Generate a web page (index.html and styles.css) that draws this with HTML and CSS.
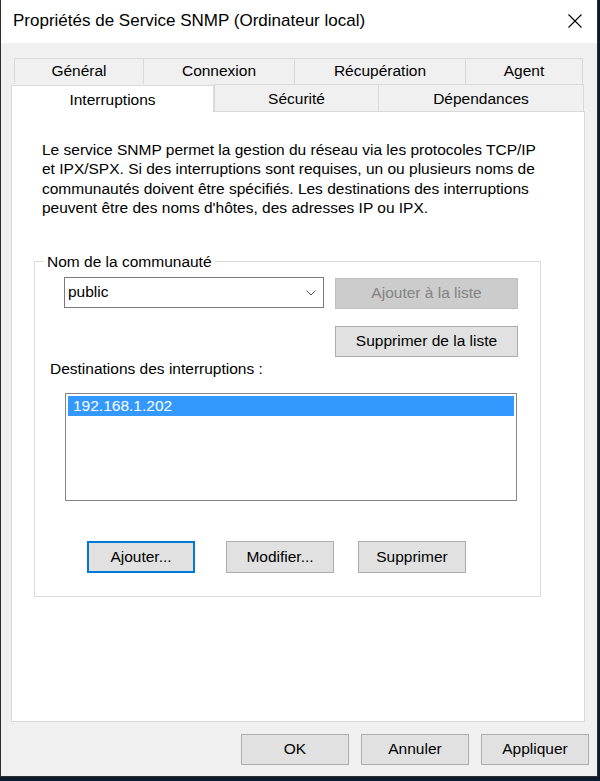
FILE: index.html
```html
<!DOCTYPE html>
<html lang="fr">
<head>
    <meta charset="UTF-8">
    <meta name="viewport" content="width=device-width, initial-scale=1.0">
    <title>Propriétés de Service SNMP</title>
    <link rel="stylesheet" href="styles.css">
</head>
<body>
    <div class="window">
        <div class="titlebar">
            <span class="title">Propriétés de Service SNMP (Ordinateur local)</span>
            <svg class="close" width="14" height="14" viewBox="0 0 14 14">
                <path d="M0.5 0.5 L13.5 13.5 M13.5 0.5 L0.5 13.5" stroke="#000" stroke-width="1.1" fill="none"/>
            </svg>
        </div>
        <div class="client">
            <div class="tabs">
                <div class="tab-row back">
                    <div class="tab t-general">Général</div>
                    <div class="tab t-connexion">Connexion</div>
                    <div class="tab t-recup">Récupération</div>
                    <div class="tab t-agent">Agent</div>
                </div>
                <div class="tab-row front">
                    <div class="tab t-interruptions active">Interruptions</div>
                    <div class="tab t-securite">Sécurité</div>
                    <div class="tab t-dependances">Dépendances</div>
                </div>
            </div>
            <div class="panel">
                <p class="intro">
                    Le service SNMP permet la gestion du réseau via les protocoles TCP/IP<br>
                    et IPX/SPX. Si des interruptions sont requises, un ou plusieurs noms de<br>
                    communautés doivent être spécifiés. Les destinations des interruptions<br>
                    peuvent être des noms d'hôtes, des adresses IP ou IPX.
                </p>
                <fieldset class="group">
                    <legend>Nom de la communauté</legend>
                    <div class="community">
                        <div class="combo">
                            <span>public</span>
                            <svg width="10" height="6" viewBox="0 0 10 6">
                                <path d="M0.5 0.5 L5 5 L9.5 0.5" stroke="#555" stroke-width="1" fill="none"/>
                            </svg>
                        </div>
                        <button class="btn" disabled>Ajouter à la liste</button>
                        <button class="btn remove">Supprimer de la liste</button>
                    </div>
                    <div class="dest-label">Destinations des interruptions :</div>
                    <div class="listbox">
                        <div class="item selected">192.168.1.202</div>
                    </div>
                    <div class="dest-actions">
                        <button class="btn focused">Ajouter...</button>
                        <button class="btn">Modifier...</button>
                        <button class="btn">Supprimer</button>
                    </div>
                </fieldset>
            </div>
            <div class="footer">
                <button class="btn">OK</button>
                <button class="btn">Annuler</button>
                <button class="btn">Appliquer</button>
            </div>
        </div>
    </div>
</body>
</html>
```

FILE: styles.css
```css
* {
    margin: 0;
    padding: 0;
    box-sizing: border-box;
}
body {
    background: #0b1a2c;
    font-family: "Liberation Sans", Arial, sans-serif;
    font-size: 15.5px;
    color: #000;
}
.window {
    width: 598px;
    height: 777px;
    background: #f0f0f0;
    border: 1px solid #2e2e2e;
    border-top: none;
}
.titlebar {
    height: 43px;
    background: #fff;
    display: flex;
    align-items: center;
    justify-content: space-between;
    padding: 0 15px 2px 12px;
}
.title {
    font-size: 17px;
}
.client {
    padding: 15px 10px 0 10px;
}
.tab-row {
    display: flex;
}
.tab {
    border: 1px solid #d9d9d9;
    border-bottom: none;
    background: #f0f0f0;
    text-align: center;
    line-height: 24px;
    margin-left: -1px;
}
.tab-row.back {
    height: 26px;
    margin-left: 3px;
}
.tab-row.back .tab:first-child {
    margin-left: 0;
}
.tab-row.front {
    height: 27px;
    align-items: flex-end;
}
.tab-row.front .tab {
    height: 27px;
    line-height: 27px;
}
.tab.active {
    position: relative;
    z-index: 2;
    height: 31px;
    line-height: 29px;
    margin-left: 0;
    margin-bottom: -1px;
    background: #fff;
}
.t-general { width: 130px; }
.t-connexion { width: 152px; }
.t-recup { width: 172px; }
.t-agent { width: 118px; }
.t-interruptions { width: 203px; }
.t-securite { width: 165px; margin-left: 0; }
.t-dependances { width: 206px; }
.panel {
    width: 574px;
    height: 611px;
    background: #fff;
    border: 1px solid #d9d9d9;
}
.intro {
    margin: 28px 0 0 30px;
    line-height: 19.3px;
}
.group {
    margin: 35px 0 0 22px;
    width: 507px;
    height: 345px;
    border: 1px solid #dcdcdc;
    padding: 0 0 0 9px;
    min-width: 0;
}
.group legend {
    padding: 0 3px;
    line-height: 19px;
}
.community {
    display: grid;
    grid-template-columns: 260px 183px;
    column-gap: 11px;
    row-gap: 16px;
    margin: 6px 0 0 20px;
}
.combo {
    height: 31px;
    border: 1px solid #7a7a7a;
    display: flex;
    align-items: center;
    justify-content: space-between;
    padding: 0 7px 1px 3px;
}
.combo svg {
    margin-top: 2px;
}
.btn {
    height: 31px;
    font-family: inherit;
    font-size: 15.5px;
    color: #000;
    background: #e1e1e1;
    border: 1px solid #adadad;
    padding-bottom: 1px;
}
.community .btn {
    margin-top: 1px;
}
.btn:disabled {
    background: #cccccc;
    border-color: #bfbfbf;
    color: #838383;
}
.btn.remove {
    grid-column: 2;
}
.btn.focused {
    border: 2px solid #0078d7;
}
.dest-label {
    margin: 2px 0 0 6px;
    line-height: 19px;
}
.listbox {
    margin: 15px 0 0 21px;
    width: 452px;
    height: 108px;
    border: 1px solid #868686;
    padding: 2px 2px;
}
.item {
    height: 20px;
    line-height: 19px;
    padding-left: 5px;
}
.item.selected {
    background: #3399ff;
    color: #fff;
}
.dest-actions {
    display: flex;
    margin: 40px 0 0 43px;
}
.dest-actions .btn {
    width: 108px;
    height: 32px;
}
.dest-actions .btn + .btn {
    margin-left: 31px;
}
.dest-actions .btn:last-child {
    margin-left: 24px;
}
.footer {
    display: flex;
    justify-content: flex-end;
    gap: 12px;
    margin: 12px -2px 0 0;
}
.footer .btn {
    width: 108px;
}
```
